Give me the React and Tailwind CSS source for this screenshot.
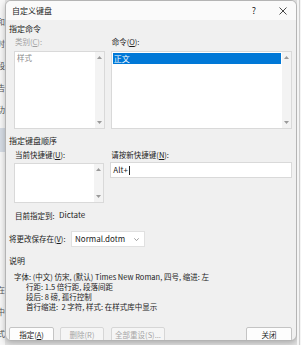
import React from 'react';

const font = { fontFamily: '"Noto Sans CJK SC", "Noto Sans", sans-serif' };

const Arrow = ({ up }) => (
  <svg width="5" height="3" viewBox="0 0 5 3" className="fill-[#9a9a9a]">
    {up ? <path d="M0 3 L2.5 0 L5 3 Z" /> : <path d="M0 0 L2.5 3 L5 0 Z" />}
  </svg>
);

const ScrollBar = () => (
  <div className="w-[9px] h-full bg-[#f3f3f3] flex flex-col items-center justify-between py-[4px]">
    <Arrow up />
    <Arrow />
  </div>
);

const U = ({ children }) => <span className="underline underline-offset-1">{children}</span>;

const App = () => {
  return (
    <div className="w-[301px] h-[345px] bg-[#e4e4e4] flex overflow-hidden text-[7.5px] leading-none text-[#1b1b1b] whitespace-nowrap" style={font}>
      {/* document behind */}
      <div className="w-[5px] h-full bg-[#f7f7f7] flex flex-col items-end overflow-hidden text-[8px] text-[#555] pt-[18px] gap-[14px]">
        <span>和</span>
        <span>时</span>
        <span>段</span>
        <span>告</span>
        <span>功</span>
        <div className="w-[5px] h-[24px] bg-[#d5dbe4]" />
        <span className="mt-[120px]">在</span>
        <span>中</span>
        <span>式</span>
      </div>

      {/* dialog */}
      <div className="w-[292px] h-[341px] bg-[#f0f0f0] rounded-[6px] border border-[#b4b4b4] shadow-[0_2px_6px_rgba(0,0,0,0.25)] flex flex-col overflow-hidden shrink-0">
        {/* title bar */}
        <div className="h-[19px] bg-[#fafafa] flex items-center pl-[6px] pr-[9px] shrink-0 text-[8px]">
          <span className="flex-1 pt-[1px]">自定义键盘</span>
          <span className="w-[10px] text-center mr-[20px] text-[9px]">?</span>
          <svg width="8" height="8" viewBox="0 0 8 8" className="stroke-[#333]">
            <path d="M0.5 0.5 L7.5 7.5 M7.5 0.5 L0.5 7.5" strokeWidth="0.9" />
          </svg>
        </div>

        <div className="flex flex-col pl-[3px] pr-[4px]">
          <div className="h-[14px] flex items-end pb-[1px] text-[8px]">指定命令</div>

          <div className="flex gap-[6px] pl-[5px]">
            <div className="w-[91px] flex flex-col">
              <div className="h-[15px] flex items-center pl-[1px] pt-[1px] text-[#a0a0a0]">类别(<U>C</U>):</div>
              <div className="h-[78px] mt-[2px] bg-white border border-[#d9d9d9] flex">
                <div className="flex-1 pl-[2px] pt-[2px] text-[#8a8a8a]">样式</div>
                <ScrollBar />
              </div>
            </div>
            <div className="w-[182px] flex flex-col">
              <div className="h-[15px] flex items-center pl-[1px] pt-[1px]">命令(<U>O</U>):</div>
              <div className="h-[78px] mt-[2px] bg-white border border-[#d9d9d9] flex">
                <div className="flex-1 p-[1px]">
                  <div className="h-[11px] bg-[#0078d7] text-white text-[8px] flex items-center pl-[1px]">正文</div>
                </div>
                <ScrollBar />
              </div>
            </div>
          </div>

          <div className="h-[17px] flex items-end pb-[1px] text-[8px]">指定键盘顺序</div>

          <div className="flex gap-[6px] pl-[5px]">
            <div className="w-[91px] flex flex-col">
              <div className="h-[15px] flex items-center pl-[1px] pt-[3px]">当前快捷键(<U>U</U>):</div>
              <div className="h-[40px] mt-[2px] bg-white border border-[#d9d9d9] flex">
                <div className="flex-1" />
                <ScrollBar />
              </div>
            </div>
            <div className="w-[183px] flex flex-col">
              <div className="h-[15px] flex items-center pl-[1px] pt-[3px]">请按新快捷键(<U>N</U>):</div>
              <div className="h-[16px] mt-[1px] bg-white border border-[#d9d9d9] flex items-center pl-[2px] text-[8px]">
                Alt+<span className="w-px h-[9px] bg-[#222] ml-[1px]" />
              </div>
            </div>
          </div>

          <div className="h-[17px] flex items-end pl-[6px] pb-[1px]">
            <span className="w-[44px]">目前指定到:</span>
            <span className="text-[8px]">Dictate</span>
          </div>

          <div className="h-[26px] flex items-center mt-[6px]">
            <span className="w-[62px]">将更改保存在(<U>V</U>):</span>
            <div className="w-[74px] h-[16px] bg-white border border-[#e0e0e0] flex items-center pl-[3px] pr-[5px] text-[8px]">
              <span className="flex-1">Normal.dotm</span>
              <svg width="5" height="3" viewBox="0 0 5 3" className="stroke-[#888] fill-none">
                <path d="M0.3 0.3 L2.5 2.6 L4.7 0.3" strokeWidth="0.8" />
              </svg>
            </div>
          </div>

          <div className="h-[14px] flex items-end pb-[1px] text-[8px]">说明</div>

          <div className="flex flex-col pl-[5px] pt-[6px] leading-[10px]">
            <div>字体: (中文) 仿宋, (默认) Times New Roman, 四号, 缩进: 左</div>
            <div className="pl-[12px]">行距: 1.5 倍行距, 段落间距</div>
            <div className="pl-[12px]">段后: 8 磅, 孤行控制</div>
            <div className="pl-[12px]">首行缩进:&nbsp; 2 字符, 样式: 在样式库中显示</div>
          </div>

          <div className="flex items-center mt-[15px]">
            <div className="w-[45px] h-[15px] bg-[#fdfdfd] border border-[#c4c4c4] rounded-[2px] flex items-center justify-center">
              指定(<U>A</U>)
            </div>
            <div className="w-[44px] h-[15px] ml-[6px] bg-[#f5f5f5] border border-[#d6d6d6] rounded-[2px] flex items-center justify-center text-[#a5a5a5]">
              删除(R)
            </div>
            <div className="w-[54px] h-[15px] ml-[7px] bg-[#f5f5f5] border border-[#d6d6d6] rounded-[2px] flex items-center justify-center text-[#a5a5a5]">
              全部重设(S)...
            </div>
            <div className="w-[46px] h-[15px] ml-auto bg-[#fdfdfd] border border-[#c4c4c4] rounded-[2px] flex items-center justify-center">
              关闭
            </div>
          </div>
        </div>
      </div>

      {/* document behind, right */}
      <div className="w-[4px] h-full bg-[#f4f4f4] flex">
        <div className="w-px h-full bg-[#cfcfcf] ml-[2px]" />
      </div>
    </div>
  );
};

export default App;
